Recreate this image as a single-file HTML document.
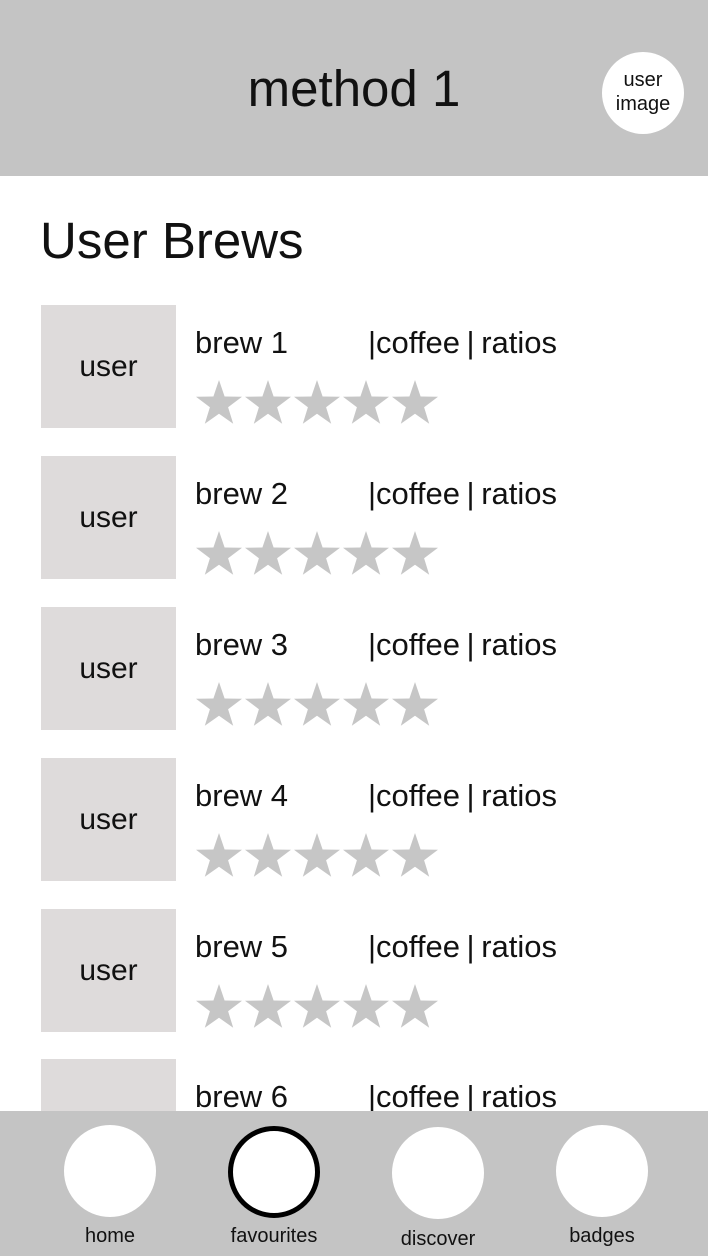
<!DOCTYPE html>
<html><head><style>
*{margin:0;padding:0;box-sizing:border-box}
body{width:708px;height:1256px;position:relative;overflow:hidden;background:#fff;font-family:"Liberation Sans",sans-serif;color:#111}
.hdr{position:absolute;left:0;top:0;width:708px;height:176px;background:#c4c4c4}
.title{position:absolute;left:0;width:708px;top:59px;text-align:center;font-size:51px}
.av{position:absolute;left:602px;top:52px;width:82px;height:82px;border-radius:50%;background:#fff;font-size:20px;text-align:center;line-height:24px;padding-top:16px}
h1{position:absolute;left:40px;top:211px;font-size:51px;font-weight:normal}
.row{position:absolute;left:0;width:708px;height:124px}
.box{position:absolute;left:41px;top:0;width:135px;height:123px;background:#dedbdb;font-size:30px;text-align:center;line-height:123px}
.b{position:absolute;left:195px;top:20px;font-size:31px}
.c{position:absolute;left:368px;top:20px;font-size:31px;word-spacing:-2px}
.st{position:absolute;left:195px;top:74px}
.nav{position:absolute;left:0;top:1111px;width:708px;height:145px;background:#c4c4c4}
.ci{position:absolute;width:92px;height:92px;border-radius:50%;background:#fff}
.lb{position:absolute;font-size:20px;width:160px;text-align:center}
</style></head><body>
<svg width="0" height="0" style="position:absolute"><defs><polygon id="s" points="24,1 29.6,17.5 47,17.7 33.1,28.2 38.2,44.8 24,34.8 9.8,44.8 14.9,28.2 1,17.7 18.4,17.5" fill="#c6c6c6"/></defs></svg>
<div class="hdr"><div class="title">method 1</div><div class="av">user<br>image</div></div>
<h1>User Brews</h1>
<div class="row" style="top:305px"><div class="box">user</div><div class="b">brew 1</div><div class="c">|coffee | ratios</div><svg class="st" width="245" height="48"><use href="#s"/><use href="#s" x="49"/><use href="#s" x="98"/><use href="#s" x="147"/><use href="#s" x="196"/></svg></div>
<div class="row" style="top:456px"><div class="box">user</div><div class="b">brew 2</div><div class="c">|coffee | ratios</div><svg class="st" width="245" height="48"><use href="#s"/><use href="#s" x="49"/><use href="#s" x="98"/><use href="#s" x="147"/><use href="#s" x="196"/></svg></div>
<div class="row" style="top:607px"><div class="box">user</div><div class="b">brew 3</div><div class="c">|coffee | ratios</div><svg class="st" width="245" height="48"><use href="#s"/><use href="#s" x="49"/><use href="#s" x="98"/><use href="#s" x="147"/><use href="#s" x="196"/></svg></div>
<div class="row" style="top:758px"><div class="box">user</div><div class="b">brew 4</div><div class="c">|coffee | ratios</div><svg class="st" width="245" height="48"><use href="#s"/><use href="#s" x="49"/><use href="#s" x="98"/><use href="#s" x="147"/><use href="#s" x="196"/></svg></div>
<div class="row" style="top:909px"><div class="box">user</div><div class="b">brew 5</div><div class="c">|coffee | ratios</div><svg class="st" width="245" height="48"><use href="#s"/><use href="#s" x="49"/><use href="#s" x="98"/><use href="#s" x="147"/><use href="#s" x="196"/></svg></div>
<div class="row" style="top:1059px"><div class="box"></div><div class="b">brew 6</div><div class="c">|coffee | ratios</div></div>
<div class="nav">
<div class="ci" style="left:64px;top:14px"></div>
<div class="ci" style="left:228px;top:15px;border:5px solid #000"></div>
<div class="ci" style="left:392px;top:16px"></div>
<div class="ci" style="left:556px;top:14px"></div>
<div class="lb" style="left:30px;top:114px">home</div>
<div class="lb" style="left:194px;top:114px">favourites</div>
<div class="lb" style="left:358px;top:117px">discover</div>
<div class="lb" style="left:522px;top:114px">badges</div>
</div>
</body></html>
